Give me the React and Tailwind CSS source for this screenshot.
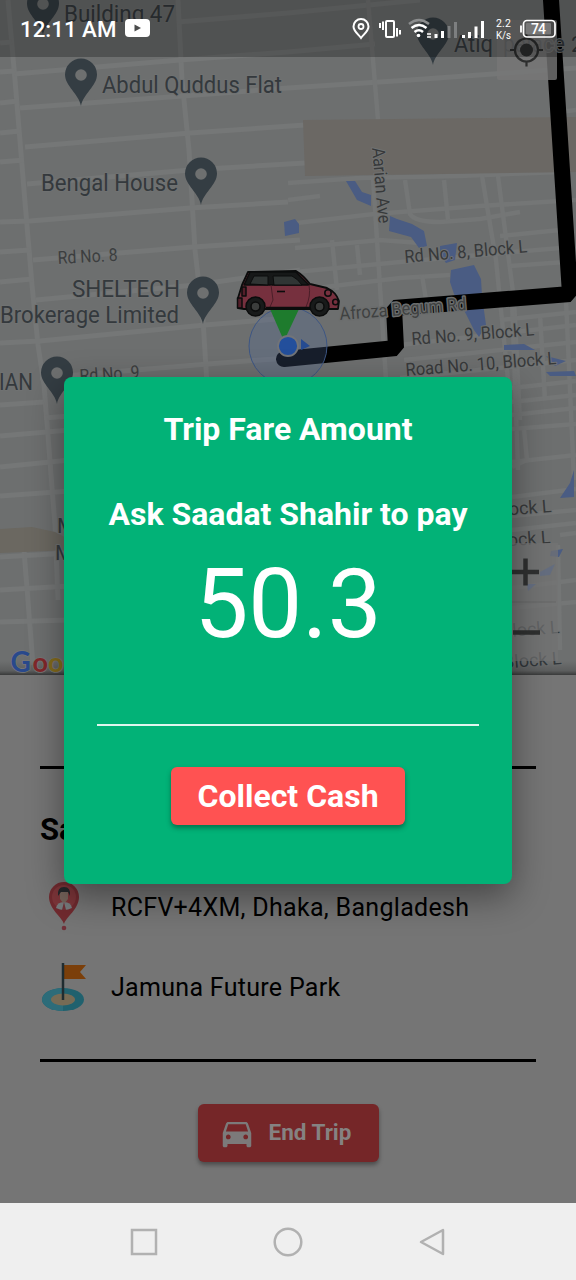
import React from "react";
import { MdDirectionsCar } from "react-icons/md";

const ROADS = [
  "M8 0L15 80L24 190L32 285L38 345L44 385L55 525L58 600",
  "M178 0L182 80L189 150L195 250L203 320L208 400",
  "M24 550L33 665",
  "M14 74L180 60L288 52L375 44",
  "M178 22L288 13L420 0",
  "M20 108L183 96L288 88L410 80L576 68",
  "M25 147L190 133L305 125",
  "M27 184L190 170L305 163",
  "M0 222L30 221L190 208L288 202",
  "M33 260L193 247L300 240",
  "M36 300L195 285L300 270",
  "M0 343L40 341L205 325L288 318",
  "M40 378L208 364L300 357",
  "M0 43L12 42",
  "M0 72L15 71",
  "M0 103L18 101",
  "M0 133L20 131",
  "M0 162L24 160",
  "M0 252L30 250",
  "M0 282L32 279",
  "M0 405L44 402",
  "M0 436L70 430",
  "M0 467L70 460",
  "M0 496L70 491",
  "M0 557L70 553",
  "M0 590L70 586",
  "M0 622L70 620",
  "M44 418L70 416",
];

const FINE_ROADS = [
  "M368 0L378 120",
  "M373 178L386 380",
  "M288 183L360 178L460 176L560 172",
  "M288 224L374 214L480 206L576 200",
  "M288 200L320 196",
  "M405 180L410 214Q415 222 440 222L480 219L520 212",
  "M444 180L448 220",
  "M482 176L496 260L510 400",
  "M498 176L514 300L520 420",
  "M332 240L337 290",
  "M357 245L360 275",
  "M295 248L380 240L420 243",
  "M295 272L400 262L468 256L560 248",
  "M300 290L400 278L450 275",
  "M422 275L426 300",
  "M500 236L560 230",
  "M510 266L565 262",
  "M512 300L518 470",
  "M400 345L576 325",
  "M404 360L576 342",
  "M400 378L576 360",
  "M540 315L545 400",
  "M566 300L574 480",
  "M500 320L576 312",
  "M560 112L576 110",
  "M512 388L576 381",
  "M512 402L576 395",
  "M512 415L576 408",
  "M512 429L576 424",
  "M512 462L576 455",
  "M524 430L527 460L512 467",
  "M512 497L576 489",
  "M512 516L576 510",
  "M512 530L576 523",
  "M560 535L576 533",
  "M512 588L576 580",
  "M512 608L576 602",
  "M558 545L560 650",
];

function PlacePin({ x, y }) {
  return (
    <g transform={`translate(${x} ${y})`}>
      <path
        d="M0 47C-2 35-16 27-16 15.500A16 16 0 0 1 16 15.500C16 27 2 35 0 47Z"
        fill="#343d43"
      />
      <circle cx="0" cy="16" r="5.800" fill="#6e7070" />
    </g>
  );
}

function Label({
  x,
  y,
  w,
  size = 23,
  rotate = 0,
  fill = "#34393d",
  halo = "#707272",
  haloWidth = 2,
  end = false,
  opacity = 1,
  children,
}) {
  return (
    <text
      x={x}
      y={y}
      fontSize={size}
      fill={fill}
      opacity={opacity}
      stroke={halo}
      strokeWidth={haloWidth}
      strokeLinejoin="round"
      paintOrder="stroke"
      textLength={w}
      lengthAdjust="spacingAndGlyphs"
      textAnchor={end ? "end" : "start"}
      transform={`rotate(${rotate} ${x} ${y})`}
    >
      {children}
    </text>
  );
}

function Car() {
  return (
    <g transform="translate(230 262)" stroke="#0b0c0c" strokeLinejoin="round">
      <path
        d="M8 36L12 23L18 10L66 9Q73 13 80 22L97 26Q106 30 109 39L108 47L14 47L8 46Z"
        fill="#76303e"
        strokeWidth="1.800"
      />
      <path d="M14 23L20 10L66 10L79 23Z" fill="#161818" strokeWidth="1.500" />
      <path d="M20 22L24 14H38V23Z M43 14H62Q68 17 72 23H44Z" fill="#303534" strokeWidth="1" />
      <path d="M41 23L43 38L40 45M79 23Q81 34 76 45" fill="none" stroke="#4a1e28" strokeWidth="1" />
      <path d="M47 29.500H55" strokeWidth="1.600" />
      <path d="M12 25H16V34H12ZM7.500 36H12V46H7.500Z" fill="#531e29" strokeWidth="1.500" />
      <circle cx="98" cy="31" r="3.200" fill="#76303e" strokeWidth="1.600" />
      <circle cx="105.500" cy="40" r="2.800" fill="#76303e" strokeWidth="1.600" />
      <path d="M36 46H80" strokeWidth="2.500" />
      <circle cx="25.500" cy="44.500" r="9.500" fill="#181a1a" strokeWidth="1.500" />
      <circle cx="25.500" cy="44.500" r="4.500" fill="#3b3d3c" strokeWidth="1.500" />
      <circle cx="89.500" cy="44.500" r="9.500" fill="#181a1a" strokeWidth="1.500" />
      <circle cx="89.500" cy="44.500" r="4.500" fill="#3b3d3c" strokeWidth="1.500" />
    </g>
  );
}

function CityMap() {
  return (
    <svg viewBox="0 0 576 675" className="block h-[675px] w-full" fontFamily="Roboto, 'Liberation Sans', sans-serif">
      <rect width="576" height="675" fill="#6d6f6f" />
      <g fill="none" stroke="#757777" strokeWidth="5">
        {ROADS.map((d) => (
          <path key={d} d={d} />
        ))}
      </g>
      <g fill="none" stroke="#747676" strokeWidth="4.500">
        {FINE_ROADS.map((d) => (
          <path key={d} d={d} />
        ))}
      </g>
      <path d="M303 120L576 117V172L305 176Z" fill="#6b6864" />
      <path d="M0 529L32 527L55 532L70 540V550L0 553Z" fill="#6b6861" />
      <g fill="#4a5c83">
        <path d="M346 181H355L362 192L371 195V206L357 200Z" />
        <path d="M284 222L295 219L299 224V233L285 236Z" />
        <path d="M390 216L397 219L412 224L424 231L427 246L419 248L411 237L389 231Z" />
        <path d="M440 246L457 243L455 260L446 263L440 254Z" />
        <path d="M451 270L474 265L481 279L482 296L486 325L479 337L474 330L466 314L454 294L450 282Z" />
        <path d="M504 345L524 344L535 350H504Z" />
        <path d="M546 356L566 361L555 366Z M546 372L574 371L576 376H550Z" />
        <path d="M574 470V497L560 498L570 483Z M551 551L563 549L559 557L550 556Z" />
      </g>
      <path
        d="M551 0L570 294L394 308L396 348L284 359"
        fill="none"
        stroke="#000"
        strokeWidth="16"
        strokeLinejoin="bevel"
        strokeLinecap="round"
      />
      <circle cx="288" cy="346" r="39" fill="#526a9c" fillOpacity="0.280" stroke="#3d5684" strokeWidth="1" />
      <path d="M270 309H299L284 341Z" fill="#1e7b2d" />
      <path d="M301 339L310 346L301 350Z" fill="#254b91" />
      <circle cx="288" cy="346" r="10" fill="#234f9c" stroke="#727478" strokeWidth="1.800" />
      <Car />
      <PlacePin x={43} y={-12} />
      <PlacePin x={81} y={59} />
      <PlacePin x={201} y={158} />
      <PlacePin x={203} y={277} />
      <PlacePin x={57} y={357} />
      <PlacePin x={433} y={18} />
      <Label x={64} y={22} w={111}>Building 47</Label>
      <Label x={102} y={92.500} w={180}>Abdul Quddus Flat</Label>
      <Label x={41} y={191} w={137}>Bengal House</Label>
      <Label x={72} y={297} w={108}>SHELTECH</Label>
      <Label x={0} y={323} w={179}>Brokerage Limited</Label>
      <Label x={-1} y={390} w={34}>IAN</Label>
      <Label x={57} y={533} size={21}>M</Label>
      <Label x={55} y={560} size={21}>M</Label>
      <Label x={454} y={52} w={39}>Atiq</Label>
      <Label x={503} y={52} w={62}>palace</Label>
      <Label x={571} y={52} size={22}>2</Label>
      <Label x={58} y={264} w={60} size={18} rotate={-3} fill="#3c3e3f">Rd No. 8</Label>
      <Label x={80} y={382} w={60} size={18} rotate={-4} fill="#3c3e3f">Rd No. 9</Label>
      <Label x={372} y={148} w={76} size={18} rotate={85} fill="#37393a">Aarian Ave</Label>
      <Label x={405} y={263} w={123} size={18} rotate={-5} fill="#37393a">Rd No. 8, Block L</Label>
      <Label x={340} y={320} w={127} size={18} rotate={-4.500} fill="#3f4141" halo="#6b6d6d" haloWidth={3}>
        Afroza Begum Rd
      </Label>
      <Label x={412} y={345} w={123} size={18} rotate={-4.500} fill="#37393a">Rd No. 9, Block L</Label>
      <Label x={406} y={376} w={151} size={18} rotate={-4.500} fill="#37393a">Road No. 10, Block L</Label>
      <Label x={552} y={512} size={18} rotate={-4.500} fill="#37393a" end>Block L</Label>
      <Label x={551} y={543} size={18} rotate={-4.500} fill="#37393a" end>Block L</Label>
      <Label x={560} y={633} size={18} rotate={-4.500} end>Block L</Label>
      <Label x={562} y={664} size={18} rotate={-4.500} end>Block L</Label>
      <path d="M497 0H557V78Q557 80 555 80H499Q497 80 497 78Z" fill="none" />
      <rect x="497" y="20" width="60" height="60" rx="2" fill="#777777" fillOpacity="0.800" />
      <g fill="none" stroke="#2d2e2e" strokeWidth="2.200">
        <circle cx="526.500" cy="50" r="11.500" />
        <path d="M526.500 34V39M526.500 61V66.500M510 50H515M538 50H543" />
      </g>
      <circle cx="526.500" cy="50" r="6.500" fill="#2d2e2e" />
      <rect x="497" y="543" width="61" height="118" fill="#737373" fillOpacity="0.700" />
      <path d="M540 572L555 564L550 575L540 576Z M527 584H536L528 591Z" fill="#5c6b89" opacity="0.600" />
      <path d="M500 602H556" stroke="#676767" strokeWidth="1" />
      <path d="M512 572H539M525.500 558.500V585.500M513 632.500H540" stroke="#2f3030" strokeWidth="4.500" />
      <defs>
        <linearGradient id="edge" x1="0" y1="0" x2="0" y2="1">
          <stop offset="0" stopColor="#000" stopOpacity="0" />
          <stop offset="0.700" stopColor="#000" stopOpacity="0.160" />
          <stop offset="1" stopColor="#000" stopOpacity="0.480" />
        </linearGradient>
      </defs>
      <rect y="661" width="576" height="14" fill="url(#edge)" />
      <text y="671.500" fontSize="28" fontFamily="Lato, sans-serif" stroke="#777" strokeWidth="1.500" paintOrder="stroke">
        <tspan x="10.500" fill="#29498c" fontWeight="700">G</tspan>
        <tspan x="32.500" fill="#81272a" fontSize="27" fontWeight="700">o</tspan>
        <tspan x="48" fill="#846b1b" fontSize="27" fontWeight="700">o</tspan>
      </text>
      <rect width="576" height="57" fill="#000" fillOpacity="0.260" />
    </svg>
  );
}

function StatusBar() {
  return (
    <div className="absolute inset-x-0 top-0 flex h-[57px] items-center justify-between pr-[20px] pl-[20px] text-white">
      <div className="flex items-center gap-[9px] pt-[2px]">
        <span className="w-[96px] text-[22.3px] leading-none font-medium whitespace-nowrap">12:11 AM</span>
        <svg width="25" height="18" viewBox="0 0 25 18" className="-mt-[2px]">
          <rect width="25" height="18" rx="4" fill="#fff" />
          <path d="M9.500 5.500L16 9L9.500 12.500Z" fill="#4b4c4c" />
        </svg>
      </div>
      <svg width="206" height="24" viewBox="350 17 206 24" fill="none" stroke="#fff" fontFamily="Roboto, sans-serif" className="shrink-0">
        <path d="M361 38C358 34 353.500 31 353.500 26.500A7.500 7.500 0 0 1 368.500 26.500C368.500 31 364 34 361 38Z" strokeWidth="2" />
        <circle cx="361" cy="26.500" r="2.500" strokeWidth="1.800" />
        <rect x="386" y="21" width="8" height="16" rx="1" strokeWidth="2" />
        <path d="M383 21.500V30M380 23V28M397 28V36.500M400 30V34.500" strokeWidth="2" />
        <path d="M409 24Q419 16 429 24" stroke="#8b8d8e" strokeWidth="2.500" />
        <path d="M411.500 28Q419 22 426.500 28M414.500 32Q419 28.500 423 32" strokeWidth="2.500" />
        <circle cx="418.500" cy="35.500" r="1.800" fill="#fff" stroke="none" />
        <path d="M427 34H431M427 37H431" strokeWidth="1.500" />
        <path d="M436 34V38M442.500 31V38" strokeWidth="3" />
        <path d="M449 26V38M455.500 22V38" stroke="#7d7f80" strokeWidth="3" />
        <path d="M463.500 35V38M469.500 32V38M476 26.500V38M482.500 21V38" strokeWidth="3" />
        <g fill="#fff" stroke="none">
          <text x="496" y="27" fontSize="10.500" textLength="15">2.2</text>
          <text x="496" y="38.500" fontSize="10.500" textLength="15" lengthAdjust="spacingAndGlyphs">K/s</text>
        </g>
        <rect x="523.500" y="20.500" width="31.500" height="16.500" rx="3.500" strokeWidth="1.700" />
        <rect x="526" y="23" width="25" height="11.500" rx="1" fill="#777" stroke="none" />
        <path d="M521 25.500V32.500" strokeWidth="1.800" />
        <text x="531" y="34" fontSize="14" fontWeight="500" fill="#fff" stroke="none" textLength="15">74</text>
      </svg>
    </div>
  );
}

function PickupIcon() {
  return (
    <svg width="48" height="50" viewBox="0 0 48 50" className="relative -top-[1px]">
      <path d="M24 43C22 36 9 28 9 16A15 15 0 0 1 39 16C39 28 26 36 24 43Z" fill="#712a2f" />
      <circle cx="24" cy="16" r="12" fill="#7d3539" />
      <path d="M16 27Q17 21 24 21Q31 21 32 27Q24 31 16 27Z" fill="#777b7d" />
      <path d="M24 21L26 29H22Z" fill="#713238" />
      <path d="M20 11H28V18Q24 25 20 18Z" fill="#76645b" />
      <path d="M18 15Q17 6 24 6Q31 6 30 15L28 11H21Z" fill="#25282b" />
      <circle cx="24" cy="47" r="2.300" fill="#713039" />
    </svg>
  );
}

function DestinationIcon() {
  return (
    <svg width="48" height="50" viewBox="0 0 48 50">
      <ellipse cx="23" cy="37.500" rx="21" ry="11.500" fill="#20616e" />
      <path d="M23 26A21 11.500 0 0 0 23 49Z" fill="#2d6c79" />
      <ellipse cx="23" cy="37.500" rx="12" ry="6" fill="#766b55" />
      <path d="M23 3H46L40 10L46 17H23Z" fill="#7b3f0a" />
      <path d="M23 1V38" stroke="#1f2c30" strokeWidth="2.500" />
    </svg>
  );
}

function TripSheet() {
  return (
    <section className="flex h-[528px] flex-col items-center bg-[#757575] px-[40px] pt-[91px]">
      <div className="h-[3px] w-full shrink-0 bg-black" />
      <div className="mt-[42px] h-[37px] w-full text-[31px] leading-[37px] font-bold text-black">Saadat Shahir</div>
      <div className="mt-[34px] flex h-[50px] w-full items-center gap-[23px]">
        <PickupIcon />
        <span className="text-[25px] leading-none tracking-[0.3px] whitespace-nowrap text-black">RCFV+4XM, Dhaka, Bangladesh</span>
      </div>
      <div className="mt-[30px] flex h-[50px] w-full items-center gap-[23px]">
        <DestinationIcon />
        <span className="text-[25px] leading-none tracking-[0.3px] whitespace-nowrap text-black">Jamuna Future Park</span>
      </div>
      <div className="mt-[47px] h-[3px] w-full shrink-0 bg-black" />
      <button className="mt-[42px] flex h-[58px] w-[181px] shrink-0 items-center gap-[13px] rounded-[6px] bg-[#752628] pl-[20px] text-[22.5px] font-bold text-[#858282] shadow-[0_3px_4px_rgba(0,0,0,0.35)]">
        <MdDirectionsCar className="size-[38px] text-[#7c7a7a]" />
        <span className="whitespace-nowrap">End Trip</span>
      </button>
    </section>
  );
}

function FareDialog() {
  return (
    <div className="absolute inset-x-[64px] top-[377px] flex h-[507px] flex-col items-center rounded-[8px] bg-[#02b277] px-[33px] pt-[34px] text-white shadow-[0_12px_36px_rgba(0,0,0,0.42)]">
      <h1 className="text-[32px] leading-[37px] font-bold whitespace-nowrap">Trip Fare Amount</h1>
      <h2 className="mt-[48px] text-[32px] leading-[37px] font-bold whitespace-nowrap">Ask Saadat Shahir to pay</h2>
      <div className="mt-[15px] text-[96px] leading-[112px]">50.3</div>
      <div className="mt-[64px] h-[2px] w-full bg-[#dff5ee]" />
      <button className="mt-[41px] h-[58px] w-[234px] rounded-[6px] bg-[#ff5252] text-[32px] leading-none font-bold whitespace-nowrap shadow-[0_3px_5px_rgba(0,0,0,0.35)]">
        Collect Cash
      </button>
    </div>
  );
}

function NavBar() {
  return (
    <nav className="flex h-[77px] items-center justify-center gap-[112px] bg-[#efefef]">
      {[
        <rect key="s" x="4" y="4" width="24" height="24" />,
        <circle key="c" cx="16" cy="16" r="13.300" />,
        <path key="b" d="M27 4V28L5 16Z" strokeLinejoin="round" />,
      ].map((shape, i) => (
        <svg key={i} width="32" height="32" viewBox="0 0 32 32" fill="none" stroke="#b1b1b1" strokeWidth="2.500">
          {shape}
        </svg>
      ))}
    </nav>
  );
}

export default function App() {
  return (
    <main className="relative flex h-[1280px] w-[576px] flex-col overflow-hidden font-['Roboto','Liberation_Sans',sans-serif]">
      <CityMap />
      <TripSheet />
      <StatusBar />
      <FareDialog />
      <NavBar />
    </main>
  );
}
